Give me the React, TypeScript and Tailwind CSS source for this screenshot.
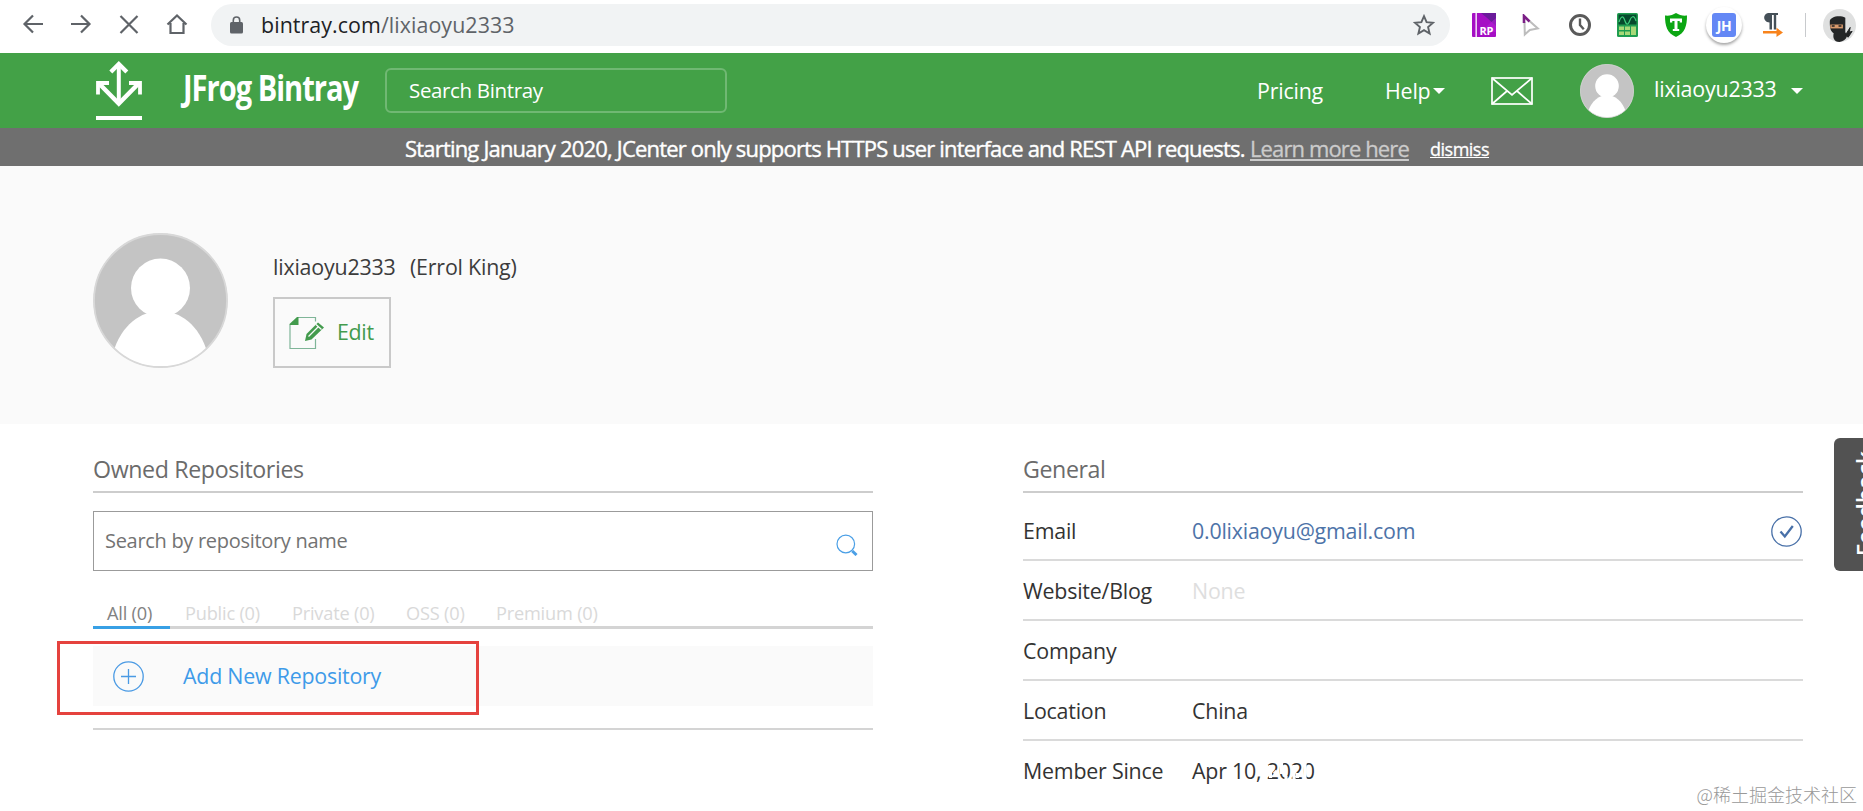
import React from 'react';

const tabs = [
  { label: 'Public (0)', className: 'ml-[15px] w-[107px]' },
  { label: 'Private (0)', className: 'w-[114px]' },
  { label: 'OSS (0)', className: 'w-[90px]' },
  { label: 'Premium (0)', className: '' },
];

const details = [
  { label: 'Website/Blog', value: 'None', color: 'text-[#dedede]' },
  { label: 'Company', value: '', color: '' },
  { label: 'Location', value: 'China', color: '' },
];

function Avatar({ className }: { className: string }) {
  return (
    <svg viewBox="0 0 135 135" className={className}>
      <defs>
        <clipPath id="avatar-clip">
          <circle cx="67.5" cy="67.5" r="66.5" />
        </clipPath>
      </defs>
      <circle cx="67.5" cy="67.5" r="67" fill="#c4c4c4" />
      <g clipPath="url(#avatar-clip)" fill="#fff">
        <circle cx="67.5" cy="55" r="29.5" />
        <path d="M20 120C28 92 48 78 67.500 78s39 14 47 42v20H20z" />
      </g>
      <circle cx="67.5" cy="67.5" r="66.5" fill="none" stroke="#d8d8d8" strokeWidth="1.800" />
    </svg>
  );
}

function Caret() {
  return (
    <svg viewBox="0 0 12 6" className="h-[6px] w-[12px]">
      <path d="M0 0h12L6 6z" fill="#fff" />
    </svg>
  );
}

function BrowserBar() {
  return (
    <div className="flex h-[53px] items-start bg-white">
      <svg viewBox="0 0 190 24" fill="none" stroke="#5f6368" strokeWidth="2.2" className="mt-[12px] ml-[10px] h-[24px] w-[190px]">
        <path d="M33 12H14.500M23 3.500L14.500 12l8.500 8.500" />
        <path d="M61 12h18.500M71 3.500l8.500 8.500-8.500 8.500" />
        <path d="M110.500 4l17 17M127.500 4l-17 17" />
        <path d="M157.500 12.500L167 3.500l9.500 9M160.500 11v10h13V11" />
      </svg>
      <div className="mt-[4px] ml-[11px] flex h-[42px] w-[1239px] items-center rounded-full bg-[#f1f3f4]">
        <svg viewBox="0 0 13 18" className="ml-[19px] h-[18px] w-[13px]">
          <rect x="0" y="6" width="13" height="11.500" rx="1.500" fill="#5f6368" />
          <path d="M3.300 7V4.200a3.200 3.200 0 0 1 6.400 0V7" fill="none" stroke="#5f6368" strokeWidth="1.600" />
        </svg>
        <span className="ml-[18px] text-[21.4px] leading-[42px] tracking-[0.07px] text-[#5f6368]">
          <span className="text-[#202124]">bintray.com</span>/lixiaoyu2333
        </span>
        <svg viewBox="0 0 22 22" className="mr-[15px] ml-auto h-[22px] w-[22px]" fill="none" stroke="#5f6368" strokeWidth="1.900">
          <path d="M11 2.200l2.600 6 6.400.600-4.900 4.300 1.500 6.400L11 16.100l-5.600 3.400 1.500-6.400L2 8.800l6.400-.600z" />
        </svg>
      </div>
      <div className="mt-[5px] flex h-[40px] items-center">
        <svg viewBox="0 0 24 24" className="ml-[22px] h-[24px] w-[24px]">
          <rect width="24" height="24" rx="1" fill="#a50fc4" />
          <path d="M9 0h15v13L14 4z" fill="#6a1b9a" />
          <path d="M24 5v14H8z" fill="#b41fd6" opacity="0.600" />
          <rect x="3.500" width="1.300" height="24" fill="#fff" />
          <text x="7.500" y="21.500" fontSize="11" fontWeight="700" fill="#fff" fontFamily="Open Sans" textLength="14">RP</text>
        </svg>
        <svg viewBox="0 0 18 23" className="ml-[26px] h-[23px] w-[18px]" fill="none" strokeWidth="2">
          <path d="M2.500 8l.300 12.500 5-4.500 8-1.500L7.500 7" stroke="#bdbdbd" />
          <path d="M2 9V2l5.500 5.500" stroke="#7b1f86" strokeWidth="2.600" />
        </svg>
        <svg viewBox="0 0 24 24" className="ml-[28px] h-[24px] w-[24px]" fill="none" stroke="#5a5a5a" strokeWidth="3">
          <circle cx="12" cy="12" r="9.500" />
          <path d="M12 5.500V12l3.800 4.200" strokeWidth="2.400" />
        </svg>
        <svg viewBox="0 0 21 24" className="ml-[25px] h-[24px] w-[21px]">
          <rect width="21" height="24" rx="1.500" fill="#1f9d50" />
          <rect x="1.500" y="1.500" width="18" height="10" fill="#064a2c" />
          <path d="M2 9c2-6 4-7 6-1s4 2 5-1 4-6 6 1" fill="none" stroke="#3fcf7c" strokeWidth="1.200" />
          <g fill="#a8d878">
            <rect x="2" y="13.500" width="5" height="3.500" />
            <rect x="8" y="13.500" width="5" height="3.500" />
            <rect x="14" y="13.500" width="5" height="8.500" />
            <rect x="2" y="18.500" width="5" height="3.500" />
            <rect x="8" y="18.500" width="5" height="3.500" />
          </g>
        </svg>
        <svg viewBox="0 0 22 24" className="ml-[27px] h-[24px] w-[22px]">
          <path d="M11 0c3 2 7 3 11 2.500C22 13 20 20 11 24 2 20 0 13 0 2.500 4 3 8 2 11 0z" fill="#0ca613" />
          <path d="M5 5.500h12v4h-2.300V8h-2.200v8h1.700v2H7.800v-2h1.700V8H7.300v1.500H5z" fill="#fff" />
        </svg>
        <div className="ml-[19px] flex h-[36px] w-[36px] items-center justify-center rounded-full bg-white shadow-[0_2px_3px_rgba(0,0,0,0.35)]">
          <div className="flex h-[24px] w-[24px] items-center justify-center rounded-[3px] bg-[#6488f5] text-[14px] font-bold tracking-[-0.5px] text-white">
            JH
          </div>
        </div>
        <svg viewBox="0 0 20 24" className="ml-[21px] h-[24px] w-[20px]">
          <path d="M6 0h9v2h-1.800v14.500h-2.400V2H9v14.500H6.500V9.500C-.500 9.500-.500 0 6 0z" fill="#455058" />
          <path d="M0 18h13.500v-3.200l6.500 4.700-6.500 4.500v-3.500H0z" fill="#f8831b" />
        </svg>
        <div className="ml-[22px] h-[24px] w-[1px] bg-[#c8cacd]" />
        <svg viewBox="0 0 34 34" className="ml-[17px] h-[33px] w-[33px]">
          <circle cx="17" cy="17" r="17" fill="#dfe0e0" />
          <path d="M7 13C7 8 17 6 23 9v15c3 4 2 8-6 10-6 0-7-5-6-9-4-2-4-8-4-12z" fill="#242627" />
          <path d="M7.500 16h13v4h-13z" fill="#d99a6c" />
          <path d="M9 17.500h3M16 17.500h3" stroke="#222" strokeWidth="1.500" />
          <path d="M23 27l5-8-1 5 3-1-4 6z" fill="#202223" stroke="#202223" />
        </svg>
      </div>
    </div>
  );
}

function Header() {
  return (
    <header className="flex h-[75px] items-start bg-[#43a147] text-white">
      <svg viewBox="0 0 46 60" className="mt-[8px] ml-[96px] h-[60px] w-[46px] shrink-0" fill="none" stroke="#fff">
        <path d="M22.800 3v40" strokeWidth="4" />
        <path d="M14.800 11l8-8 8 8" strokeWidth="4.200" />
        <path d="M3 22.500l19.800 20 19.800-20" strokeWidth="4.400" />
        <path d="M2 33.500V22h11M44 33.500V22H33" strokeWidth="3.800" />
        <path d="M0 57h46" strokeWidth="4" />
      </svg>
      <div className="ml-[41px] w-[202px] shrink-0">
        <span className="inline-block origin-left scale-x-[0.83] text-[35px] leading-[70px] font-bold tracking-[-1.2px] whitespace-nowrap">
          JFrog Bintray
        </span>
      </div>
      <div className="mt-[15px] h-[45px] w-[342px] shrink-0 rounded-[6px] border-2 border-[#70b873] pl-[22px] text-[20.5px] leading-[41px] tracking-[-0.35px]">
        Search Bintray
      </div>
      <nav className="ml-[530px] flex h-[75px] text-[21.4px] leading-[76px] tracking-[-0.2px]">
        <span className="w-[128px]">Pricing</span>
        <span className="w-[48px]">Help</span>
        <span className="mt-[35px] mr-[46px] flex h-[6px] items-center">
          <Caret />
        </span>
        <svg viewBox="0 0 42 28" className="mt-[24px] h-[28px] w-[42px]" fill="none" stroke="#fff" strokeWidth="1.700">
          <rect x="1" y="1" width="40" height="26" />
          <path d="M1 1l20 17L41 1M1 27l15-13M41 27L26 14" />
        </svg>
        <Avatar className="mt-[11px] ml-[47px] h-[54px] w-[54px]" />
        <span className="ml-[20px] w-[137px] leading-[72px]">lixiaoyu2333</span>
        <span className="mt-[35px] flex h-[6px] items-center">
          <Caret />
        </span>
      </nav>
    </header>
  );
}

function Notice() {
  return (
    <div className="flex h-[38px] bg-[#6f6f6f] pl-[405px] text-[22px] leading-[40px] whitespace-nowrap text-white">
      <span className="w-[845px] tracking-[-0.81px] [-webkit-text-stroke:0.4px_white]">
        Starting January 2020, JCenter only supports HTTPS user interface and REST API requests.
      </span>
      <span className="w-[180px] tracking-[-0.88px] text-[#cbcbcb] underline [-webkit-text-stroke:0.3px_#cbcbcb]">Learn more here</span>
      <span className="text-[18px] leading-[43px] tracking-[-0.5px] underline [-webkit-text-stroke:0.3px_white]">dismiss</span>
    </div>
  );
}

function Profile() {
  return (
    <section className="flex h-[258px] bg-[#fafafa] pt-[67px] pl-[93px]">
      <Avatar className="h-[135px] w-[135px]" />
      <div className="ml-[45px]">
        <div className="flex h-[64px] text-[21.4px] leading-[67px] tracking-[-0.2px] text-[#3c3c3c]">
          <span className="w-[137px]">lixiaoyu2333</span>
          <span>(Errol King)</span>
        </div>
        <button className="flex h-[71px] w-[118px] items-center border-2 border-[#c9c9c9] pl-[14px] text-[21.4px] tracking-[-0.3px] text-[#439b4d]">
          <svg viewBox="0 0 36 34" className="h-[34px] w-[36px]">
            <path d="M9 1.500h17.500v4M26.500 23v9.500H1V9" fill="none" stroke="#7fb598" strokeWidth="1.200" />
            <path d="M.500 9V8L8 1h1.500v8z" fill="#439b4d" />
            <path d="M16 25l1.500-7L29 6.500l6 5L22.500 23.500z" fill="#439b4d" />
            <path d="M19.500 20.500L29 11M27 8.500l5.500 5" stroke="#fafafa" strokeWidth="1.300" />
          </svg>
          <span className="ml-[12px]">Edit</span>
        </button>
      </div>
    </section>
  );
}

function Repositories() {
  return (
    <section className="w-[780px]">
      <h2 className="h-[69px] border-b-2 border-[#cdcdcd] pt-[23px] text-[23.2px] leading-[45px] tracking-[-0.37px] text-[#6b6b6b]">
        Owned Repositories
      </h2>
      <div className="mt-[18px] flex h-[60px] items-center border border-[#9b9b9b] pl-[11px]">
        <span className="text-[20px] tracking-[-0.3px] text-[#737373]">Search by repository name</span>
        <svg viewBox="0 0 22 22" className="mt-[8px] mr-[14px] ml-auto h-[22px] w-[22px]" fill="none" stroke="#4a9fe6">
          <circle cx="9.800" cy="10" r="8.800" strokeWidth="1.200" />
          <path d="M16.300 17l4.200 4" strokeWidth="3" />
        </svg>
      </div>
      <div className="mt-[34px] flex h-[24px] border-b-[3px] border-[#d4d4d4] text-[18.2px] leading-[17px] tracking-[-0.2px] text-[#d9d9d9]">
        <span className="h-[24px] w-[77px] border-b-[3px] border-[#38a0e5] pl-[14px] text-[#828282]">All (0)</span>
        {tabs.map((tab) => (
          <span key={tab.label} className={tab.className}>
            {tab.label}
          </span>
        ))}
      </div>
      <div className="relative mt-[17px] flex h-[60px] items-center bg-[#fafafa] pl-[20px]">
        <svg viewBox="0 0 31 31" className="h-[31px] w-[31px]" fill="none" stroke="#4a9ae4" strokeWidth="1.300">
          <circle cx="15.500" cy="15.500" r="14.700" />
          <path d="M8 15.500h15M15.500 8v15" />
        </svg>
        <span className="ml-[39px] text-[21.4px] tracking-[-0.23px] text-[#3e9be9]">Add New Repository</span>
        <div className="absolute -top-[5px] -left-[36px] h-[74px] w-[422px] border-[3px] border-[#e5423e]" />
      </div>
      <div className="mt-[22px] h-[2px] bg-[#d4d4d4]" />
    </section>
  );
}

function General() {
  return (
    <section className="w-[780px] text-[21.4px] tracking-[-0.22px] text-[#333]">
      <h2 className="h-[69px] border-b-2 border-[#cdcdcd] pt-[23px] text-[23.2px] leading-[45px] tracking-[-0.4px] text-[#6b6b6b]">
        General
      </h2>
      <div className="flex h-[68px] items-center border-b-2 border-[#dadada] pt-[11px]">
        <span className="w-[169px]">Email</span>
        <span className="text-[#4d73a8]">0.0lixiaoyu@gmail.com</span>
        <svg viewBox="0 0 31 31" className="mr-[1px] ml-auto h-[31px] w-[31px]" fill="none" stroke="#4870a8">
          <circle cx="15.500" cy="15.500" r="14.700" strokeWidth="1.300" />
          <path d="M9.500 15.500l4.300 5 8-10.500" strokeWidth="2.300" />
        </svg>
      </div>
      {details.map((item) => (
        <div key={item.label} className="flex h-[60px] items-center border-b-2 border-[#dadada] pt-[2px]">
          <span className="w-[169px]">{item.label}</span>
          <span className={item.color}>{item.value}</span>
        </div>
      ))}
      <div className="flex h-[60px] items-center">
        <span className="w-[169px]">Member Since</span>
        <span className="relative">
          Apr 10, 2020
          <svg viewBox="0 0 48 20" className="absolute top-[6px] right-0 h-[20px] w-[48px]" stroke="#fff">
            <path d="M3.500 4v13M7 13l3-3M14.500 0v13M19 15v5M27 4v16M30.500 12v5M38 0v20" strokeWidth="3.200" />
          </svg>
        </span>
      </div>
    </section>
  );
}

export default function App() {
  return (
    <div className="relative h-[811px] w-[1863px] overflow-hidden bg-white font-['Open_Sans','Noto_Sans_CJK_SC',sans-serif]">
      <BrowserBar />
      <Header />
      <Notice />
      <Profile />
      <main className="flex gap-[150px] pl-[93px]">
        <Repositories />
        <General />
      </main>
      <div className="absolute top-[438px] left-[1834px] h-[133px] w-[46px] rounded-l-[6px] bg-[#525252]">
        <span className="absolute top-[13px] left-[16px] rotate-180 text-[23px] leading-[30px] font-semibold text-white [writing-mode:vertical-rl]">
          Feedback
        </span>
      </div>
      <div className="absolute right-[6px] bottom-[3px] font-['Noto_Sans_CJK_SC',sans-serif] text-[18px] font-light text-[#999]">
        @稀土掘金技术社区
      </div>
    </div>
  );
}
